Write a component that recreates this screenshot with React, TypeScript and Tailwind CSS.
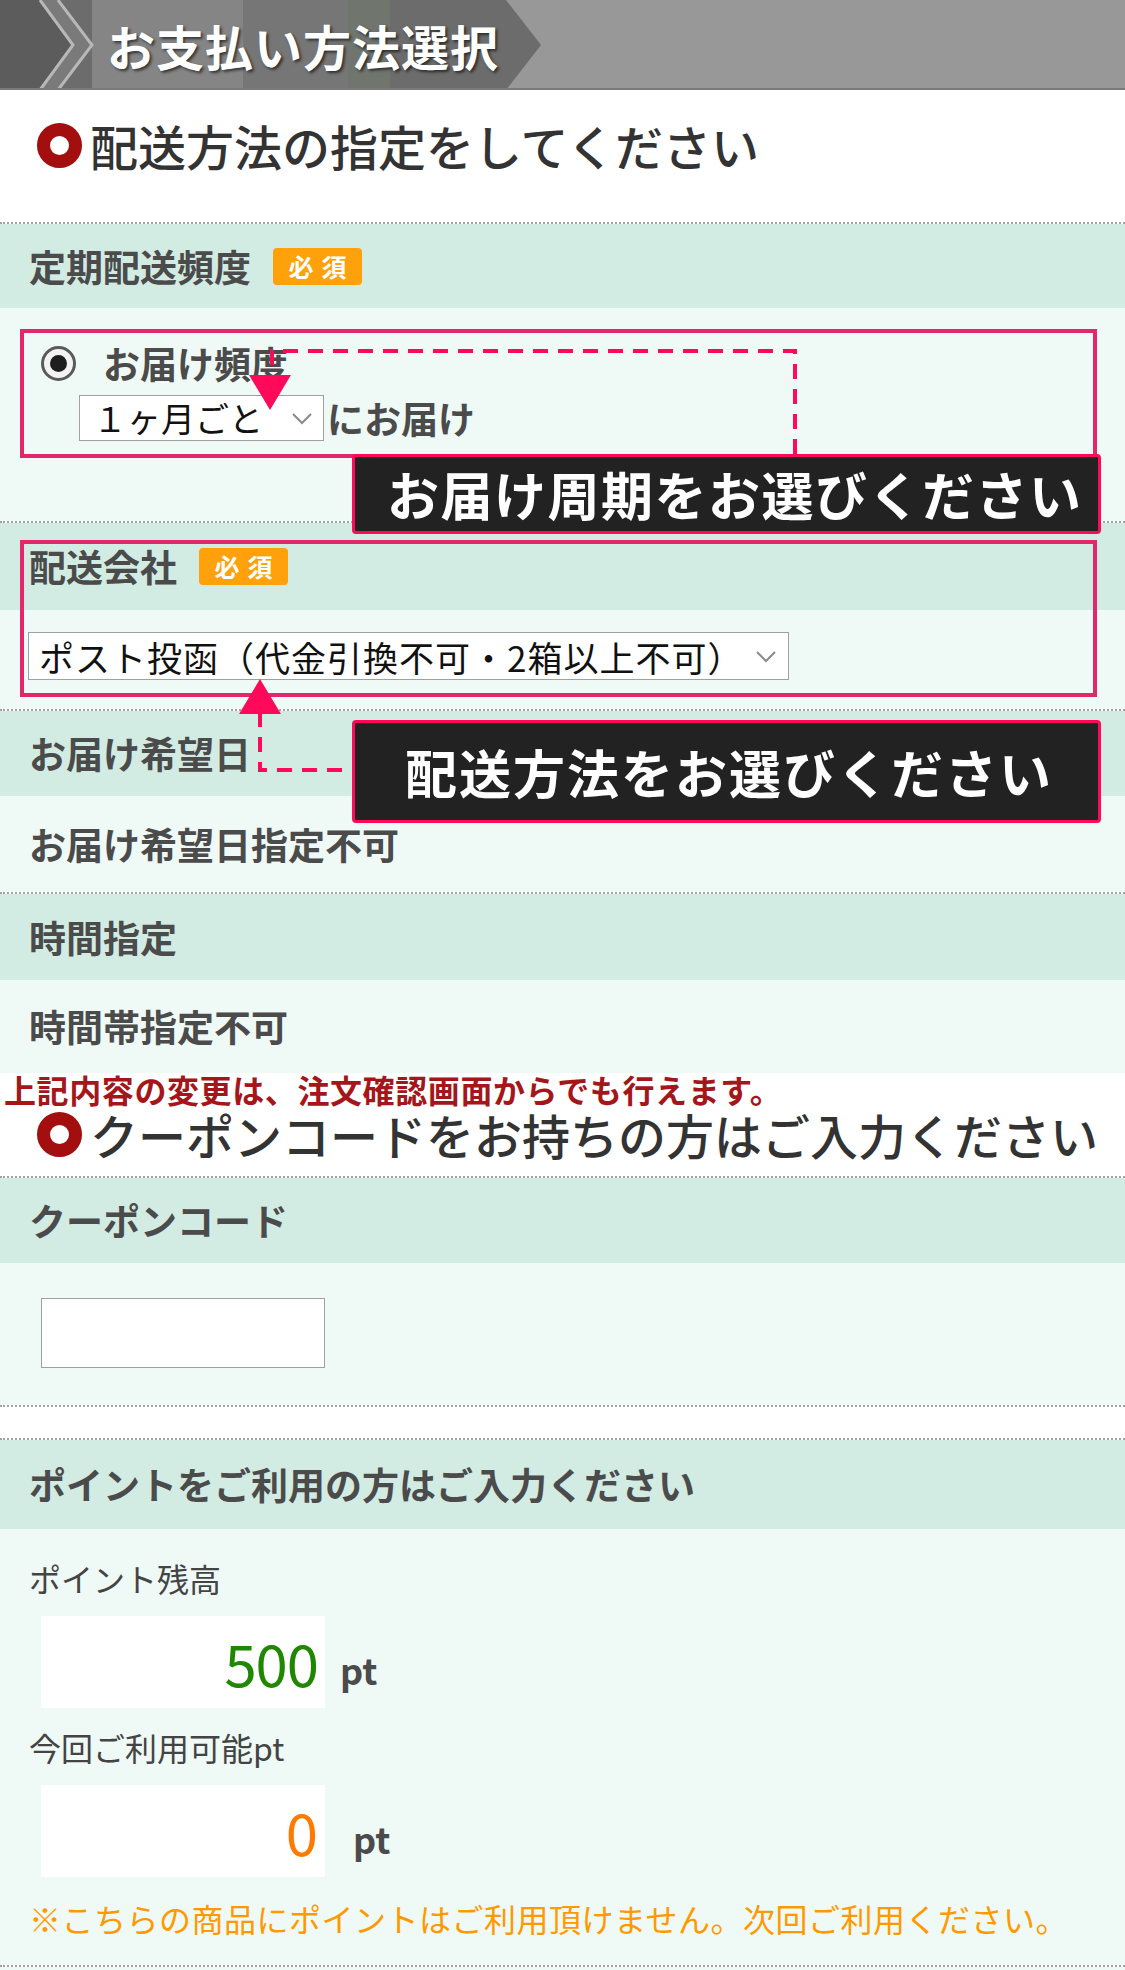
import type { ReactNode } from "react"

const Dots = () => (
  <div className="h-[2px] border-t-2 border-dotted border-[#a3a3a3]" />
)

const Badge = () => (
  <span className="ml-[22px] inline-flex h-[37px] w-[89px] items-center justify-center rounded-[4px] bg-[#ffa10a] pl-[8px] text-[25px] leading-none font-bold tracking-[8px] text-white">
    必須
  </span>
)

interface BandProps {
  label: string
  className: string
  required?: boolean
}

const Band = ({ label, className, required }: BandProps) => (
  <div className={`flex items-center bg-[#d2ebe3] pl-[29px] ${className}`}>
    <h3 className="text-[37px] leading-none font-bold text-[#4b4b4b]">
      {label}
    </h3>
    {required && <Badge />}
  </div>
)

const SectionTitle = ({ children }: { children: ReactNode }) => (
  <div className="flex h-[50px] items-center">
    <span className="ml-[37px] h-[45px] w-[45px] shrink-0 rounded-full border-[13px] border-[#a30e0e] bg-white" />
    <h2 className="ml-[8px] text-[48px] leading-[50px] font-medium text-[#333]">
      {children}
    </h2>
  </div>
)

const Chevron = () => (
  <svg width="22" height="13" viewBox="0 0 22 13">
    <polyline
      points="2,2 11,11 20,2"
      fill="none"
      stroke="#8a8a8a"
      strokeWidth="2"
    />
  </svg>
)

const Radio = () => (
  <span className="flex h-[35px] w-[35px] shrink-0 items-center justify-center rounded-full border-[3px] border-[#5a5a5a] bg-[#f3f3f3]">
    <span className="h-[17px] w-[17px] rounded-full bg-[#1e1e1e]" />
  </span>
)

const HeaderBg = () => (
  <svg
    className="absolute inset-0"
    width="1125"
    height="90"
    viewBox="0 0 1125 90"
  >
    <rect width="1125" height="90" fill="#989898" />
    <polygon points="0,0 506,0 541,45 506,90 0,90" fill="#6c6c6c" />
    <rect x="92" y="0" width="151" height="90" fill="#858585" />
    <rect x="243" y="0" width="105" height="90" fill="#767676" />
    <rect x="348" y="0" width="42" height="90" fill="#70756e" />
    <polygon points="0,0 40,0 73,45 40,90 0,90" fill="#5c5c5c" />
    <polygon points="40,0 58,0 92,45 58,90 40,90 73,45" fill="#7a7a7a" />
    <polyline
      points="40,0 73,45 40,90"
      fill="none"
      stroke="#b8b8b8"
      strokeWidth="3"
    />
    <polyline
      points="58,0 92,45 58,90"
      fill="none"
      stroke="#b8b8b8"
      strokeWidth="3"
    />
    <line x1="0" y1="89" x2="1125" y2="89" stroke="#7a7a7a" strokeWidth="2" />
  </svg>
)

const PINK = "#ff0a5a"

const Annotations = () => (
  <div className="pointer-events-none absolute inset-0">
    <div className="absolute top-[329px] left-[20px] h-[129px] w-[1077px] border-4 border-[#e3276b]" />
    <div className="absolute top-[540px] left-[20px] h-[157px] w-[1077px] border-4 border-[#e3276b]" />
    <svg className="absolute inset-0" width="1125" height="1970">
      <path
        d="M795 454 V351 H272 V376"
        fill="none"
        stroke={PINK}
        strokeWidth="4"
        strokeDasharray="15 10"
      />
      <polygon points="249,375 291,375 270,410" fill={PINK} />
      <polygon points="260,679 281,714 239,714" fill={PINK} />
      <path
        d="M260 712 V770 H352"
        fill="none"
        stroke={PINK}
        strokeWidth="4"
        strokeDasharray="15 10"
      />
    </svg>
    <div className="absolute top-[454px] left-[352px] flex h-[80px] w-[749px] items-center rounded-[4px] border-[3px] border-[#ff0a5a] bg-[#222222] pl-[32px]">
      <p className="text-[52px] leading-none font-bold tracking-[1.5px] text-white">
        お届け周期をお選びください
      </p>
    </div>
    <div className="absolute top-[720px] left-[352px] flex h-[103px] w-[749px] items-center rounded-[4px] border-[3px] border-[#ff0a5a] bg-[#222222] pl-[50px]">
      <p className="text-[52px] leading-none font-bold tracking-[2px] text-white">
        配送方法をお選びください
      </p>
    </div>
  </div>
)

const App = () => {
  return (
    <div className="relative h-[1970px] w-full overflow-hidden bg-white font-['Noto_Sans_CJK_JP','Noto_Sans',sans-serif]">
      <header className="relative h-[90px]">
        <HeaderBg />
        <h1 className="relative flex h-[90px] items-center pl-[107px] text-[48px] leading-none font-bold tracking-[1px] text-white [text-shadow:2px_2px_3px_rgba(0,0,0,0.6)]">
          お支払い方法選択
        </h1>
      </header>

      <div className="h-[132px] pt-[30px]">
        <SectionTitle>配送方法の指定をしてください</SectionTitle>
      </div>
      <Dots />

      <Band label="定期配送頻度" className="h-[84px]" required />
      <div className="h-[213px] bg-[#eff9f5] pt-[37px] pl-[41px]">
        <div className="flex h-[36px] items-center">
          <Radio />
          <span className="ml-[27px] text-[37px] leading-none font-bold text-[#4b4b4b]">
            お届け頻度
          </span>
        </div>
        <div className="mt-[14px] ml-[38px] flex items-center">
          <div className="flex h-[46px] w-[245px] items-center justify-between border border-[#a0a0a0] bg-white pr-[10px] pl-[13px]">
            <span className="text-[34px] leading-none text-[#111]">
              １ヶ月ごと
            </span>
            <Chevron />
          </div>
          <span className="ml-[3px] text-[37px] leading-none font-bold text-[#4b4b4b]">
            にお届け
          </span>
        </div>
      </div>
      <Dots />

      <Band label="配送会社" className="h-[87px]" required />
      <div className="h-[99px] bg-[#eff9f5] pt-[22px] pl-[28px]">
        <div className="flex h-[48px] w-[761px] items-center justify-between border border-[#a0a0a0] bg-white pr-[11px] pl-[10px]">
          <span className="text-[35px] leading-none tracking-[1px] text-[#111]">
            ポスト投函（代金引換不可・2箱以上不可）
          </span>
          <Chevron />
        </div>
      </div>
      <Dots />

      <Band label="お届け希望日" className="h-[85px]" />
      <div className="flex h-[96px] items-center bg-[#eff9f5] pl-[29px]">
        <p className="text-[37px] leading-none font-bold text-[#4b4b4b]">
          お届け希望日指定不可
        </p>
      </div>
      <Dots />

      <Band label="時間指定" className="h-[86px]" />
      <div className="flex h-[93px] items-center bg-[#eff9f5] pl-[29px]">
        <p className="text-[37px] leading-none font-bold text-[#4b4b4b]">
          時間帯指定不可
        </p>
      </div>

      <div className="flex h-[32px] items-center pl-[4px]">
        <p className="text-[32px] leading-[30px] font-bold tracking-[0.6px] text-[#a4161a]">
          上記内容の変更は、注文確認画面からでも行えます。
        </p>
      </div>
      <div className="h-[71px] pt-[4px]">
        <SectionTitle>クーポンコードをお持ちの方はご入力ください</SectionTitle>
      </div>
      <Dots />

      <Band label="クーポンコード" className="h-[85px]" />
      <div className="h-[142px] bg-[#eff9f5] pt-[35px] pl-[41px]">
        <div className="h-[70px] w-[284px] border border-[#a0a0a0] bg-white" />
      </div>
      <Dots />
      <div className="h-[31px] bg-white" />
      <Dots />

      <Band label="ポイントをご利用の方はご入力ください" className="h-[89px]" />
      <div className="h-[436px] bg-[#eff9f5] pt-[29px] pl-[29px]">
        <p className="text-[32px] leading-[40px] text-[#444]">ポイント残高</p>
        <div className="mt-[18px] flex items-center">
          <div className="ml-[12px] flex h-[92px] w-[284px] items-center justify-end bg-white pr-[7px]">
            <span className="text-[58px] leading-none tracking-[-1px] text-[#1f8700]">
              500
            </span>
          </div>
          <span className="mt-[14px] ml-[15px] text-[36px] leading-none font-bold text-[#4b4b4b]">
            pt
          </span>
        </div>
        <p className="mt-[19px] text-[32px] leading-[40px] text-[#444]">
          今回ご利用可能pt
        </p>
        <div className="mt-[18px] flex items-center">
          <div className="ml-[12px] flex h-[92px] w-[284px] items-center justify-end bg-white pr-[7px]">
            <span className="text-[58px] leading-none text-[#ff7a00]">0</span>
          </div>
          <span className="mt-[14px] ml-[28px] text-[36px] leading-none font-bold text-[#4b4b4b]">
            pt
          </span>
        </div>
        <p className="mt-[21px] text-[32px] leading-[40px] tracking-[0.5px] text-[#ff9900]">
          ※こちらの商品にポイントはご利用頂けません。次回ご利用ください。
        </p>
      </div>
      <Dots />
      <div className="h-[3px] bg-[#eff9f5]" />

      <Annotations />
    </div>
  )
}

export default App
